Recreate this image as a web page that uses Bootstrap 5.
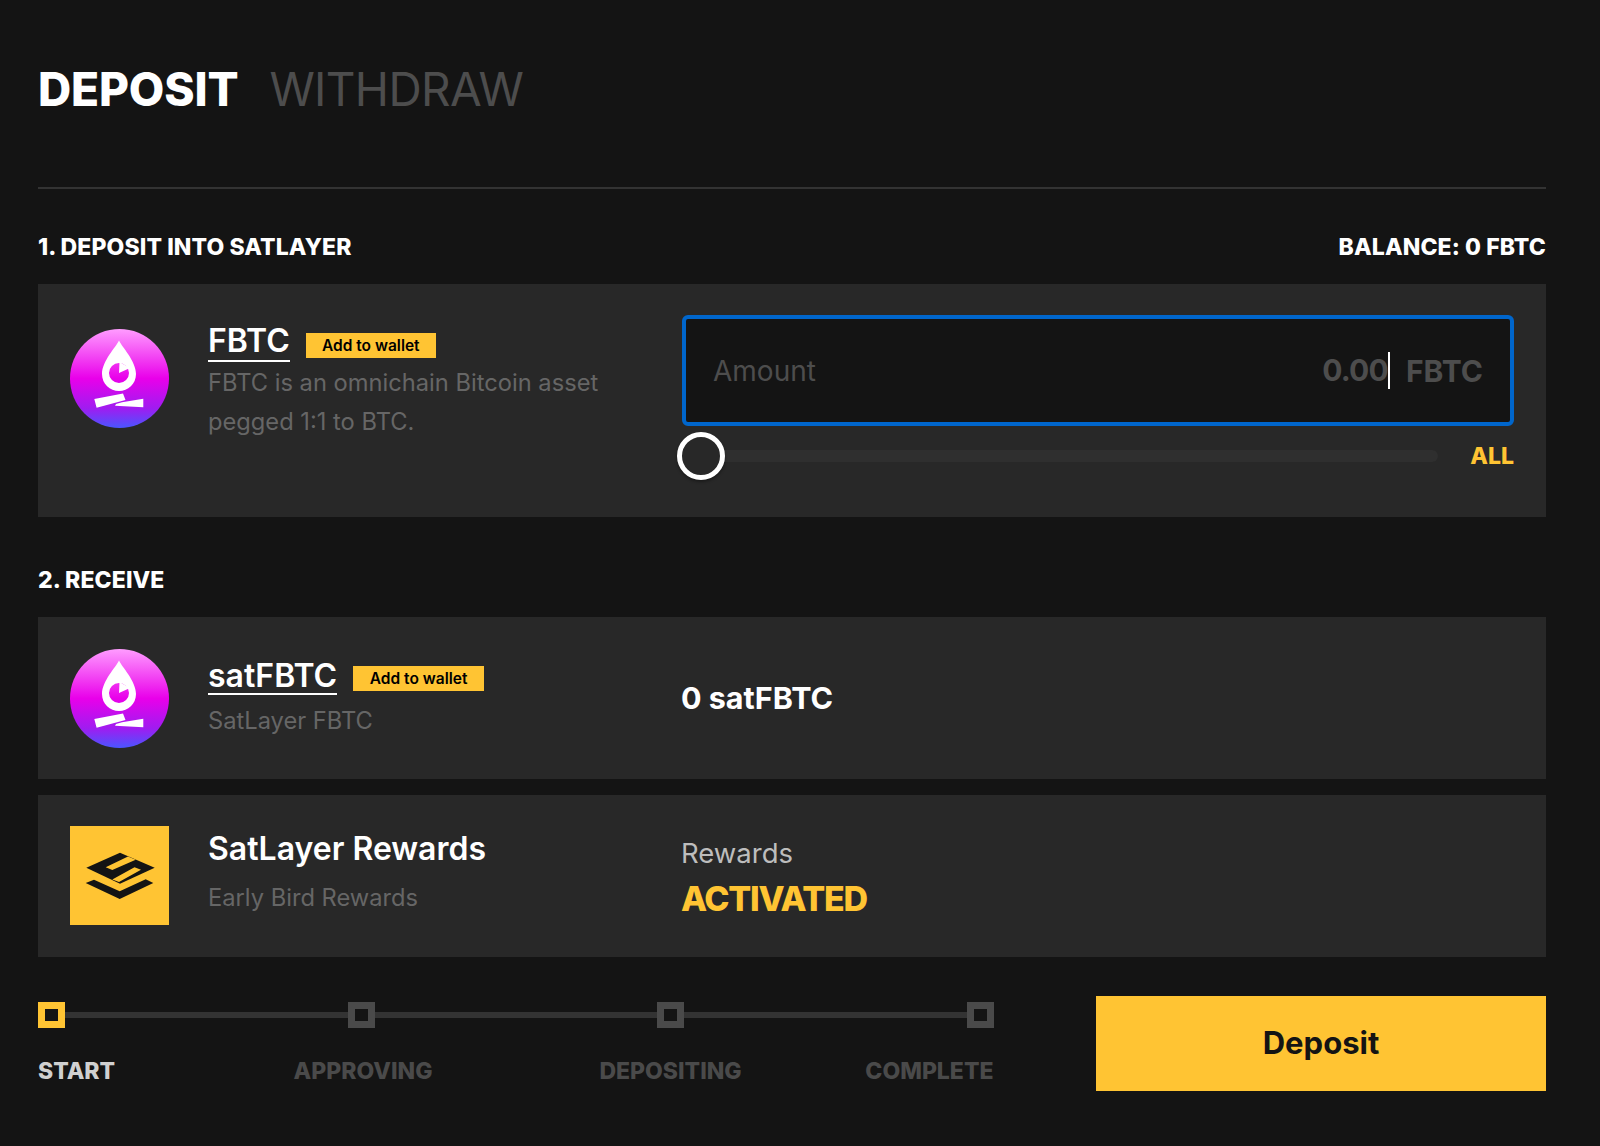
<!doctype html>
<html lang="en"><head><meta charset="utf-8"><title>Deposit</title>
<link href="https://cdn.jsdelivr.net/npm/bootstrap@5.3.0/dist/css/bootstrap.min.css" rel="stylesheet">
<style>
html,body{height:100%}
body{background:#141414;color:#fff;font-family:Inter,"Liberation Sans",sans-serif;-webkit-font-smoothing:antialiased}
.wrap{padding:0 54px 0 38px;height:1146px}
.tabs{height:189px;padding-top:56px;border-bottom:2px solid #333;margin-bottom:0}
.tabon,.taboff{font-size:46px;line-height:66px;background:none;border:0;padding:0;color:#fff}
.tabon{font-weight:800;margin-right:31px;letter-spacing:-.15px}
.taboff{font-weight:400;color:#4d4d4d;letter-spacing:-.65px}
.sect{font-size:23px;font-weight:800;line-height:30px;letter-spacing:.1px;margin:0}
.sect1{padding-top:43px;padding-bottom:22px}
.sect2{padding-top:48px;padding-bottom:22px}
.pane{background:#282828;padding-left:32px;padding-right:32px}
.pane1{height:233px;padding-top:31px}
.pane2{height:162px;margin-bottom:16px}
.pane3{height:162px;padding-top:31px}
.left{width:611px;flex:none}
.ico{width:99px;height:99px;flex:none;margin-right:39px;display:block}
.icotop{padding-top:14px}
.txttop{padding-top:6px}
.nm{font-size:32px;font-weight:600;line-height:36px;border-bottom:2px solid #fff;display:inline-block;padding:2px 0 1px}
.nm2{line-height:34px;padding:5px 0 0}
.nmplain{font-size:32px;font-weight:600;line-height:36px;margin-top:5px}
.addw{background:#ffc433;color:#000;font-size:15.5px;font-weight:600;width:130px;height:25px;line-height:23px;padding:0;border:1px solid #ffc433;border-radius:0;margin-left:16px}
.addw2{width:131px}
.addw:hover{background:#ffc433;color:#000}
.dsc{font-size:23.7px;line-height:39px;color:#666;margin:0}
.dsc1{margin-top:1px}
.dsc2{margin-top:6px;line-height:40px}
.txt2{padding-bottom:2px}
.dsc3{margin-top:11px;line-height:40px}
.inputcol{margin-left:1px}
.amt{height:111px;background:#141414;border:4px solid #06c;border-radius:6px;padding:0 27px}
.amtlabel{font-size:28px;color:#4d4d4d;line-height:1}
.amtinput{background:transparent;border:0;border-radius:0;padding:0;font-size:30px;font-weight:700;color:#fff;letter-spacing:-.8px;text-align:right;width:auto;box-shadow:none;flex:1 1 auto;min-width:0}
.amtinput::placeholder{color:#4d4d4d;opacity:1}
.amtinput:focus{background:transparent;box-shadow:none;color:#fff}
.caret{width:2px;height:37px;background:#fff;flex:none;margin-right:16px}
.unit{font-size:30px;font-weight:700;color:#4d4d4d;line-height:1}
.slide{height:48px;margin-top:6px}
.rail{height:12px;background:#2f2f2f;position:relative;flex:1 1 auto;margin-left:19px;margin-right:32px;border-radius:6px}
.knob{position:absolute;left:-24px;top:-18px;width:48px;height:48px;border-radius:50%;background:#282828;border:5px solid #fff;box-shadow:0 2px 3px rgba(0,0,0,.35)}
.allb{color:#ffc433;font-size:23px;font-weight:800;line-height:1}
.val{font-size:30.5px;font-weight:700;line-height:1}
.rlab{font-size:27.5px;line-height:48px;color:#bdbdbd;margin-top:3px}
.ract{font-size:34px;font-weight:800;line-height:44px;letter-spacing:-1.3px;color:#ffc433}
.foot{padding-top:39px}
.steps{width:955.5px;padding-top:6px}
.dot{width:27px;height:26px;border:7px solid #4a4a4a;background:#141414;flex:none}
.dot.on{border-color:#ffc433}
.line{height:6px;background:#333;flex:1 1 auto}
.cell{width:27px;display:flex;white-space:nowrap;font-size:23px;font-weight:800;line-height:28px;color:#4a4a4a}
.cell.on{color:#d0d0d0}
.cellshift{padding-left:4px}
.lbls{margin-top:29px}
.dep{background:#ffc433;color:#141414;font-size:31px;font-weight:700;border:0;border-radius:0;width:450px;height:95px;padding:0}
.dep:hover{background:#ffc433;color:#141414}
</style></head>
<body>
<div class="wrap">
  <div class="tabs d-flex align-items-start">
    <button class="tabon" type="button">DEPOSIT</button><button class="taboff" type="button">WITHDRAW</button>
  </div>

  <div class="d-flex justify-content-between sect1">
    <h2 class="sect">1. DEPOSIT INTO SATLAYER</h2><div class="sect">BALANCE: 0 FBTC</div>
  </div>
  <div class="pane pane1 d-flex">
    <div class="left d-flex pe-4">
      <div class="icotop">
      <svg class="ico" viewBox="0 0 99 99" aria-hidden="true"><defs><linearGradient id="g1" x1="0" y1="0" x2="0" y2="1"><stop offset="0" stop-color="#ff9cff"/><stop offset=".5" stop-color="#e900ea"/><stop offset=".8" stop-color="#a01cf0"/><stop offset="1" stop-color="#4a55ff"/></linearGradient></defs><circle cx="49.5" cy="49.5" r="49.5" fill="url(#g1)"/><path fill="#fff" fill-rule="evenodd" d="M49 11.5C46 18 32 32 32 45C32 55 40 62 49 62C58 62 66 55 66 45C66 32 52 18 49 11.5ZM49 34A10 10 0 1 0 49 54A10 10 0 1 0 49 34Z"/><path fill="#fff" d="M49 44L49.5 33L60 39ZM24.3 70L53 64.5L55.5 71L26.6 78.7ZM52 73.3L73.3 69.7L73.3 78.3L45 76.7L46 75Z"/></svg>
      </div>
      <div class="txttop">
        <div class="d-flex align-items-end"><span class="nm">FBTC</span><button class="btn addw mb-1" type="button">Add to wallet</button></div>
        <p class="dsc dsc1">FBTC is an omnichain Bitcoin asset<br>pegged 1:1 to BTC.</p>
      </div>
    </div>
    <div class="flex-grow-1 inputcol">
      <div class="amt d-flex align-items-center">
        <span class="amtlabel">Amount</span>
        <input class="form-control amtinput" type="text" placeholder="0.00" aria-label="Amount">
        <span class="caret"></span>
        <span class="unit">FBTC</span>
      </div>
      <div class="slide d-flex align-items-center">
        <div class="rail"><span class="knob"></span></div>
        <span class="allb">ALL</span>
      </div>
    </div>
  </div>

  <div class="sect2"><h2 class="sect">2. RECEIVE</h2></div>
  <div class="pane pane2 d-flex align-items-center">
    <div class="left d-flex align-items-center">
      <svg class="ico" viewBox="0 0 99 99" aria-hidden="true"><circle cx="49.5" cy="49.5" r="49.5" fill="url(#g1)"/><path fill="#fff" fill-rule="evenodd" d="M49 11.5C46 18 32 32 32 45C32 55 40 62 49 62C58 62 66 55 66 45C66 32 52 18 49 11.5ZM49 34A10 10 0 1 0 49 54A10 10 0 1 0 49 34Z"/><path fill="#fff" d="M49 44L49.5 33L60 39ZM24.3 70L53 64.5L55.5 71L26.6 78.7ZM52 73.3L73.3 69.7L73.3 78.3L45 76.7L46 75Z"/></svg>
      <div class="txt2">
        <div class="d-flex align-items-end"><span class="nm nm2">satFBTC</span><button class="btn addw addw2 mb-1" type="button">Add to wallet</button></div>
        <p class="dsc dsc2">SatLayer FBTC</p>
      </div>
    </div>
    <span class="val">0 satFBTC</span>
  </div>
  <div class="pane pane3 d-flex">
    <div class="left d-flex">
      <svg class="ico" viewBox="0 0 99 99" aria-hidden="true"><rect width="99" height="99" fill="#ffc433"/><path fill="#141414" d="M16.3 41.7L50 26.7L84.7 41.7L50 57.7Z"/><path fill="#ffc433" d="M58 30.5L35.7 41.3L42.3 44L65.7 33.7ZM42.3 53.5L64.5 41.3L71 43.7L49 56Z"/><path fill="#141414" d="M15.7 57L24 53.7L49.7 65.3L75.7 53.3L83.3 57L49.7 73Z"/></svg>
      <div>
        <div class="nmplain">SatLayer Rewards</div>
        <p class="dsc dsc3">Early Bird Rewards</p>
      </div>
    </div>
    <div>
      <div class="rlab">Rewards</div>
      <div class="ract">ACTIVATED</div>
    </div>
  </div>

  <div class="foot d-flex justify-content-between align-items-start">
    <div class="steps">
      <div class="d-flex align-items-center">
        <span class="dot on"></span><span class="line"></span><span class="dot"></span><span class="line"></span><span class="dot"></span><span class="line"></span><span class="dot"></span>
      </div>
      <div class="lbls d-flex justify-content-between">
        <span class="cell on justify-content-start">START</span>
        <span class="cell cellshift justify-content-center">APPROVING</span>
        <span class="cell justify-content-center">DEPOSITING</span>
        <span class="cell justify-content-end">COMPLETE</span>
      </div>
    </div>
    <button class="btn dep" type="button">Deposit</button>
  </div>
</div>
<script src="https://cdn.jsdelivr.net/npm/bootstrap@5.3.0/dist/js/bootstrap.bundle.min.js"></script>
</body></html>
